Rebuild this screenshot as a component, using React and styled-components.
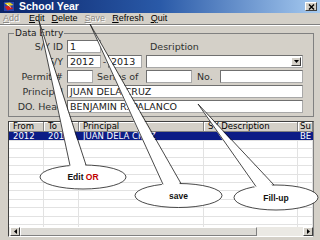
import React from 'react'
import styled, { createGlobalStyle } from 'styled-components'

const GlobalStyle = createGlobalStyle`
  html, body {
    margin: 0;
    padding: 0;
    background: #d4d0c8;
  }
  body {
    width: 320px;
    height: 240px;
    overflow: hidden;
    font-family: "DejaVu Sans", sans-serif;
  }
`

const Window = styled.div`
  position: relative;
  width: 320px;
  height: 240px;
  background: #d4d0c8;
  overflow: hidden;
  display: flex;
  flex-direction: column;
`

const TitleBar = styled.div`
  height: 13px;
  flex: none;
  display: flex;
  align-items: center;
  padding: 0 3px 0 3px;
  background: linear-gradient(to right, #0a246a 0%, #2a5aa8 50%, #a6caf0 100%);
`

const TitleText = styled.span`
  margin-left: 4px;
  color: #ffffff;
  font-family: "Liberation Sans", Arial, sans-serif;
  font-weight: bold;
  font-size: 10.5px;
  line-height: 13px;
`

const CloseButton = styled.div`
  margin-left: auto;
  width: 12px;
  height: 9px;
  box-sizing: border-box;
  background: #d4d0c8;
  border: 1px solid;
  border-color: #ffffff #404040 #404040 #ffffff;
  display: flex;
  align-items: center;
  justify-content: center;
`

const MenuBar = styled.div`
  height: 11px;
  flex: none;
  display: flex;
  align-items: center;
  gap: 7px;
  padding-left: 3px;
  border-bottom: 1px solid #808080;
  box-shadow: 0 1px 0 #ffffff;
`

const MenuItem = styled.span`
  font-family: "Liberation Sans", Arial, sans-serif;
  font-size: 9px;
  line-height: 11px;
  color: ${p => (p.$disabled ? '#8c8a86' : '#000000')};
  text-shadow: ${p => (p.$disabled ? '1px 1px 0 #ffffff' : 'none')};
  margin-right: ${p => p.$extra || 0}px;
  white-space: nowrap;
`

const Content = styled.div`
  flex: 1;
  min-height: 0;
  min-width: 0;
  display: flex;
  flex-direction: column;
  padding: 3px 6px 3px 8px;
`

const GroupBox = styled.fieldset`
  margin: 0;
  padding: 1px 9px 3px 2px;
  border: 1px solid #808080;
  display: flex;
  flex-direction: column;
  gap: 2px;
  min-width: 0;
`

const Legend = styled.legend`
  margin-left: 3px;
  padding: 0 1px;
  font-size: 9px;
  line-height: 11px;
  color: #202020;
`

const Row = styled.div`
  height: 13px;
  display: flex;
  align-items: center;
`

const Label = styled.span`
  width: 52px;
  margin-right: 4px;
  flex: none;
  text-align: right;
  white-space: nowrap;
  font-size: 9.5px;
  color: #303030;
`

const InlineLabel = styled.span`
  width: ${p => p.$w}px;
  padding-left: ${p => p.$pad || 0}px;
  box-sizing: border-box;
  flex: none;
  white-space: nowrap;
  font-size: 9.5px;
  color: #303030;
  text-align: ${p => (p.$center ? 'center' : 'left')};
`

const Field = styled.div`
  width: ${p => p.$w}px;
  height: 13px;
  flex: none;
  box-sizing: border-box;
  background: #ffffff;
  border: 1px solid;
  border-color: #707070 #a8a8a8 #a8a8a8 #707070;
  padding-left: 2px;
  font-size: 9.5px;
  line-height: 11px;
  color: #202020;
  white-space: nowrap;
  overflow: hidden;
  display: flex;
  align-items: center;
`

const DropButton = styled.div`
  margin-left: auto;
  margin-right: 1px;
  width: 10px;
  height: 9px;
  box-sizing: border-box;
  background: #d4d0c8;
  border: 1px solid;
  border-color: #ffffff #404040 #404040 #ffffff;
  display: flex;
  align-items: center;
  justify-content: center;
`

const Table = styled.div`
  margin-top: 4px;
  flex: 1;
  min-height: 0;
  min-width: 0;
  display: flex;
  flex-direction: column;
  background: #ffffff;
  border: 1px solid;
  border-color: #404040 #808080 #ffffff #404040;
  overflow: hidden;
`

const cols = '35px 35px 125px 94px minmax(0, 1fr)'

const HeaderRow = styled.div`
  height: 10px;
  flex: none;
  display: grid;
  grid-template-columns: ${cols};
`

const HeaderCell = styled.div`
  min-width: 0;
  box-sizing: border-box;
  background: #d4d0c8;
  border-right: 1px solid #808080;
  border-bottom: 1px solid #808080;
  box-shadow: inset 1px 1px 0 #ffffff;
  padding-left: ${p => p.$pad ?? 4}px;
  font-size: 8.5px;
  line-height: 9px;
  color: #000000;
  white-space: nowrap;
  overflow: hidden;
`

const Body = styled.div`
  flex: 1;
  min-height: 0;
  overflow: hidden;
`

const DataRow = styled.div`
  height: ${p => (p.$selected ? 9 : 8.4)}px;
  box-sizing: border-box;
  display: grid;
  grid-template-columns: ${cols};
  background: ${p => (p.$selected ? '#0c1c86' : '#ffffff')};
  border-bottom: 1px solid #e2e2e2;
`

const Cell = styled.div`
  min-width: 0;
  box-sizing: border-box;
  border-right: 1px solid ${p => (p.$selected ? '#0c1c86' : '#e2e2e2')};
  padding-left: ${p => p.$pad ?? 4}px;
  font-size: 8.5px;
  line-height: 8px;
  color: #ffffff;
  white-space: nowrap;
  overflow: hidden;
`

const ScrollBar = styled.div`
  height: 9px;
  flex: none;
  display: flex;
  padding-left: 1px;
  background: #ebe9e4;
`

const ScrollButton = styled.div`
  width: 10px;
  flex: none;
  box-sizing: border-box;
  background: #d4d0c8;
  border: 1px solid;
  border-color: #ffffff #404040 #404040 #ffffff;
  display: flex;
  align-items: center;
  justify-content: center;
`

const Thumb = styled.div`
  width: 237px;
  flex: none;
  box-sizing: border-box;
  background: #dcdad5;
  border: 1px solid;
  border-color: #ffffff #808080 #808080 #ffffff;
`

const Track = styled.div`
  flex: 1;
`

const Overlay = styled.svg`
  position: absolute;
  left: 0;
  top: 0;
  pointer-events: none;
`

const Arrow = ({ dir }) => {
  const pts = {
    down: '0,0 5,0 2.5,3',
    left: '3,0 3,5 0,2.5',
    right: '0,0 0,5 3,2.5',
  }[dir]
  const size = dir === 'down' ? [5, 3] : [3, 5]
  return (
    <svg width={size[0]} height={size[1]} viewBox={`0 0 ${size[0]} ${size[1]}`}>
      <polygon points={pts} fill="#000" />
    </svg>
  )
}

const AppIcon = () => (
  <svg width="12" height="11" viewBox="0 0 12 11">
    <rect x="0.5" y="0.5" width="11" height="10" fill="#2846b0" stroke="#0a1a50" strokeWidth="0.6" />
    <path d="M1.5 2 L7 1.5 L10.5 4 L5 5 Z" fill="#e8d020" />
    <path d="M1.5 5.5 L6.5 4.8 L10.5 7.5 L4.5 9.5 Z" fill="#d02020" />
    <path d="M4 3 L8 6.5" stroke="#ffffff" strokeWidth="0.8" />
  </svg>
)

const callouts = [
  { id: 'edit', cx: 83, cy: 177, rx: 43, ry: 12, tip: [39, 21], base: [70, 86] },
  { id: 'save', cx: 178.5, cy: 195.5, rx: 43.5, ry: 12, tip: [90, 24], base: [163, 181] },
  { id: 'fill', cx: 276, cy: 197.5, rx: 42, ry: 12.5, tip: [198, 104], base: [256, 274] },
]

const edgeY = (c, x) => c.cy - c.ry * Math.sqrt(1 - ((x - c.cx) / c.rx) ** 2)

const Callout = ({ c, children }) => {
  const [l, r] = c.base
  const yl = edgeY(c, l)
  const yr = edgeY(c, r)
  const [tx, ty] = c.tip
  return (
    <g>
      <ellipse cx={c.cx} cy={c.cy} rx={c.rx} ry={c.ry} fill="#fff" stroke="#1a1a1a" strokeWidth="0.8" />
      <polygon points={`${l},${yl + 2.5} ${tx},${ty} ${r},${yr + 2.5}`} fill="#fff" />
      <polyline points={`${l},${yl} ${tx},${ty} ${r},${yr}`} fill="none" stroke="#1a1a1a" strokeWidth="0.8" />
      <text
        x={c.cx}
        y={c.cy + 3}
        textAnchor="middle"
        fontFamily="'Liberation Sans', Arial, sans-serif"
        fontWeight="bold"
        fontSize="8.5"
        fill="#111"
      >
        {children}
      </text>
    </g>
  )
}

const emptyRows = Array.from({ length: 11 }, (_, i) => i)

export default function App() {
  return (
    <>
      <GlobalStyle />
      <Window>
        <TitleBar>
          <AppIcon />
          <TitleText>School Year</TitleText>
          <CloseButton>
            <svg width="7" height="6" viewBox="0 0 7 6">
              <path d="M1 0.5 L6 5.5 M6 0.5 L1 5.5" stroke="#000" strokeWidth="1.4" />
            </svg>
          </CloseButton>
        </TitleBar>

        <MenuBar>
          <MenuItem $disabled $extra={3}><u>A</u>dd</MenuItem>
          <MenuItem><u>E</u>dit</MenuItem>
          <MenuItem><u>D</u>elete</MenuItem>
          <MenuItem $disabled><u>S</u>ave</MenuItem>
          <MenuItem><u>R</u>efresh</MenuItem>
          <MenuItem><u>Q</u>uit</MenuItem>
        </MenuBar>

        <Content>
          <GroupBox>
            <Legend>Data Entry</Legend>
            <Row>
              <Label>S/Y ID</Label>
              <Field $w={34}>1</Field>
              <InlineLabel $w={140} $pad={49}>Desription</InlineLabel>
            </Row>
            <Row>
              <Label>S/Y</Label>
              <Field $w={34}>2012</Field>
              <InlineLabel $w={7} $center>-</InlineLabel>
              <Field $w={34}>2013</Field>
              <InlineLabel $w={4} />
              <Field $w={157}>
                <DropButton><Arrow dir="down" /></DropButton>
              </Field>
            </Row>
            <Row>
              <Label>Permit #</Label>
              <Field $w={26} />
              <InlineLabel $w={53} $pad={4}>Series of</InlineLabel>
              <Field $w={46} />
              <InlineLabel $w={28} $pad={5}>No.</InlineLabel>
              <Field $w={83} />
            </Row>
            <Row>
              <Label>Principal</Label>
              <Field $w={236}>JUAN DELA CRUZ</Field>
            </Row>
            <Row>
              <Label>DO. Head</Label>
              <Field $w={236}>BENJAMIN R. PALANCO</Field>
            </Row>
          </GroupBox>

          <Table>
            <HeaderRow>
              <HeaderCell>From</HeaderCell>
              <HeaderCell>To</HeaderCell>
              <HeaderCell>Principal</HeaderCell>
              <HeaderCell>SY Description</HeaderCell>
              <HeaderCell $pad={2}>Su</HeaderCell>
            </HeaderRow>
            <Body>
              <DataRow $selected>
                <Cell $selected>2012</Cell>
                <Cell $selected>2013</Cell>
                <Cell $selected>JUAN DELA CRUZ</Cell>
                <Cell $selected></Cell>
                <Cell $selected $pad={2}>BE</Cell>
              </DataRow>
              {emptyRows.map(i => (
                <DataRow key={i}>
                  <Cell /><Cell /><Cell /><Cell /><Cell />
                </DataRow>
              ))}
            </Body>
            <ScrollBar>
              <ScrollButton><Arrow dir="left" /></ScrollButton>
              <Thumb />
              <Track />
              <ScrollButton><Arrow dir="right" /></ScrollButton>
            </ScrollBar>
          </Table>
        </Content>

        <Overlay width="320" height="240" viewBox="0 0 320 240">
          <Callout c={callouts[0]}>
            Edit <tspan fill="#c00000">OR</tspan>
          </Callout>
          <Callout c={callouts[1]}>save</Callout>
          <Callout c={callouts[2]}>Fill-up</Callout>
        </Overlay>
      </Window>
    </>
  )
}
